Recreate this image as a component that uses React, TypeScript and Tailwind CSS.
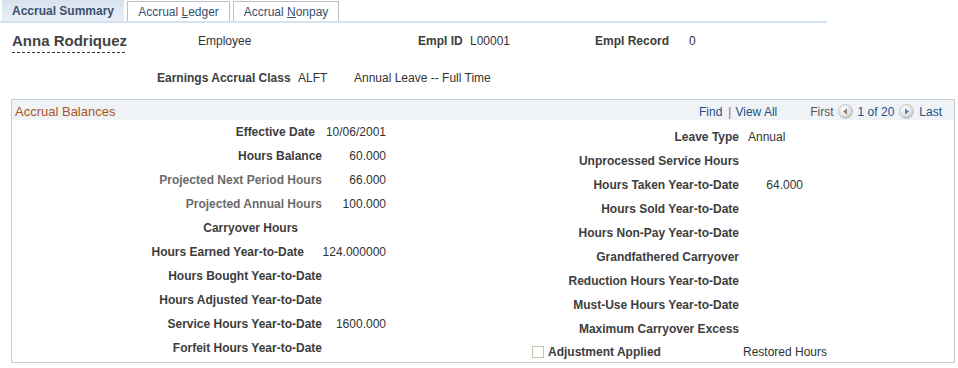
import React from "react";

type Row = {
  label: string;
  lw: string;
  vw?: string;
  value?: string;
  muted?: boolean;
};

const leftRows: Row[] = [
  { label: "Effective Date", lw: "w-[303px]", vw: "w-[71px]", value: "10/06/2001" },
  { label: "Hours Balance", lw: "w-[310px]", vw: "w-[64px]", value: "60.000" },
  { label: "Projected Next Period Hours", lw: "w-[310px]", vw: "w-[64px]", value: "66.000", muted: true },
  { label: "Projected Annual Hours", lw: "w-[310px]", vw: "w-[64px]", value: "100.000", muted: true },
  { label: "Carryover Hours", lw: "w-[286px]" },
  { label: "Hours Earned Year-to-Date", lw: "w-[292px]", vw: "w-[82px]", value: "124.000000" },
  { label: "Hours Bought Year-to-Date", lw: "w-[310px]" },
  { label: "Hours Adjusted Year-to-Date", lw: "w-[310px]" },
  { label: "Service Hours Year-to-Date", lw: "w-[310px]", vw: "w-[64px]", value: "1600.000" },
  { label: "Forfeit Hours Year-to-Date", lw: "w-[310px]" },
];

const rightRows: Row[] = [
  { label: "Unprocessed Service Hours", lw: "w-[247px]" },
  { label: "Hours Taken Year-to-Date", lw: "w-[247px]", vw: "w-[64px]", value: "64.000" },
  { label: "Hours Sold Year-to-Date", lw: "w-[247px]" },
  { label: "Hours Non-Pay Year-to-Date", lw: "w-[247px]" },
  { label: "Grandfathered Carryover", lw: "w-[247px]" },
  { label: "Reduction Hours Year-to-Date", lw: "w-[247px]" },
  { label: "Must-Use Hours Year-to-Date", lw: "w-[247px]" },
  { label: "Maximum Carryover Excess", lw: "w-[247px]" },
];

function Field({ row }: { row: Row }) {
  return (
    <div className="flex h-[24px] items-center whitespace-nowrap">
      <div
        className={`${row.lw} text-right font-bold ${row.muted ? "text-[#6b6b6b]" : "text-[#3d3d3d]"}`}
      >
        {row.label}
      </div>
      {row.value && <div className={`${row.vw} text-right text-[#333]`}>{row.value}</div>}
    </div>
  );
}

function NavIcon({ dir }: { dir: "prev" | "next" }) {
  return (
    <svg width="15" height="15" viewBox="0 0 15 15" className="self-start">
      <defs>
        <radialGradient id={`g-${dir}`} cx="40%" cy="35%" r="70%">
          <stop offset="0%" stopColor="#ffffff" />
          <stop offset="60%" stopColor="#e4e4e4" />
          <stop offset="100%" stopColor="#b9b9b9" />
        </radialGradient>
      </defs>
      <circle cx="7.5" cy="7.5" r="7" fill={`url(#g-${dir})`} stroke="#bdbdbd" strokeWidth="0.8" />
      {dir === "prev" ? (
        <path d="M5 7.5 L9 4.5 L9 10.5 Z" fill="#7c7c7c" />
      ) : (
        <path d="M10 7.5 L6 4.5 L6 10.5 Z" fill="#4a7cc0" />
      )}
    </svg>
  );
}

export default function App() {
  return (
    <div className="w-[958px] h-[368px] overflow-hidden bg-white font-['Liberation_Sans',Arial,sans-serif] text-[12px] text-[#333]">
      {/* Tabs */}
      <div className="flex h-[23px] w-[827px] items-end gap-[3px] border-b-2 border-[#d6e2f0] pl-[2px]">
        <div className="flex h-[21px] w-[122px] items-center justify-center bg-gradient-to-b from-[#d8e2ef] to-[#e9eff7] font-bold text-[#3b4f6e]">
          Accrual Summary
        </div>
        <div className="flex h-[20px] w-[103px] items-center justify-center border border-b-0 border-[#b8bfc9] bg-white text-[#36506e]">
          <span>
            Accrual <u>L</u>edger
          </span>
        </div>
        <div className="flex h-[20px] w-[106px] items-center justify-center border border-b-0 border-[#b8bfc9] bg-white text-[#36506e]">
          <span>
            Accrual <u>N</u>onpay
          </span>
        </div>
      </div>

      {/* Employee header */}
      <div className="mt-[9px] flex h-[21px] items-start whitespace-nowrap pl-[12px] leading-[18px]">
        <div className="flex w-[186px] flex-col">
          <span className="text-[15px] font-bold text-[#444]">Anna Rodriquez</span>
          <div className="mt-[2px] h-px w-[113px] bg-[repeating-linear-gradient(90deg,#333_0px,#333_3px,transparent_3px,transparent_5px)]" />
        </div>
        <div className="w-[220px]">Employee</div>
        <div className="w-[52px] font-bold text-[#3d3d3d]">Empl ID</div>
        <div className="w-[125px]">L00001</div>
        <div className="w-[94px] font-bold text-[#3d3d3d]">Empl Record</div>
        <div>0</div>
      </div>
      <div className="mt-[16px] flex whitespace-nowrap pl-[157px] leading-[18px]">
        <div className="w-[141px] font-bold text-[#3d3d3d]">Earnings Accrual Class</div>
        <div className="w-[56px]">ALFT</div>
        <div>Annual Leave -- Full Time</div>
      </div>

      {/* Accrual Balances box */}
      <div className="ml-[11px] mt-[12px] h-[264px] w-[944px] border border-[#c6cbd1]">
        <div className="flex h-[20px] items-center bg-[#eff3f5] pt-[3px] whitespace-nowrap">
          <div className="w-[687px] pl-[3px] text-[13px] text-[#a9561e]">Accrual Balances</div>
          <span className="text-[#1f4f8f]">Find</span>
          <span className="ml-[6px] text-[#c0661a]">|</span>
          <span className="ml-[4px] text-[#1f4f8f]">View All</span>
          <span className="ml-[33px] text-[#555]">First</span>
          <span className="ml-[4px] flex">
            <NavIcon dir="prev" />
          </span>
          <span className="ml-[5px] text-[#1f4f8f]">1 of 20</span>
          <span className="ml-[5px] flex">
            <NavIcon dir="next" />
          </span>
          <span className="ml-[5px] text-[#1f4f8f]">Last</span>
        </div>

        <div className="flex">
          <div className="w-[480px]">
            {leftRows.map((r) => (
              <Field key={r.label} row={r} />
            ))}
          </div>
          <div className="pt-[5px]">
            <div className="flex h-[24px] items-center whitespace-nowrap">
              <div className="w-[247px] text-right font-bold text-[#3d3d3d]">Leave Type</div>
              <div className="ml-[9px]">Annual</div>
            </div>
            {rightRows.map((r) => (
              <Field key={r.label} row={r} />
            ))}
            <div className="flex h-[22px] items-center whitespace-nowrap">
              <div className="ml-[40px] h-[12px] w-[12px] border border-[#c5c2b2] bg-white" />
              <div className="ml-[4px] w-[195px] font-bold text-[#3d3d3d]">Adjustment Applied</div>
              <div>Restored Hours</div>
            </div>
          </div>
        </div>
      </div>
    </div>
  );
}
